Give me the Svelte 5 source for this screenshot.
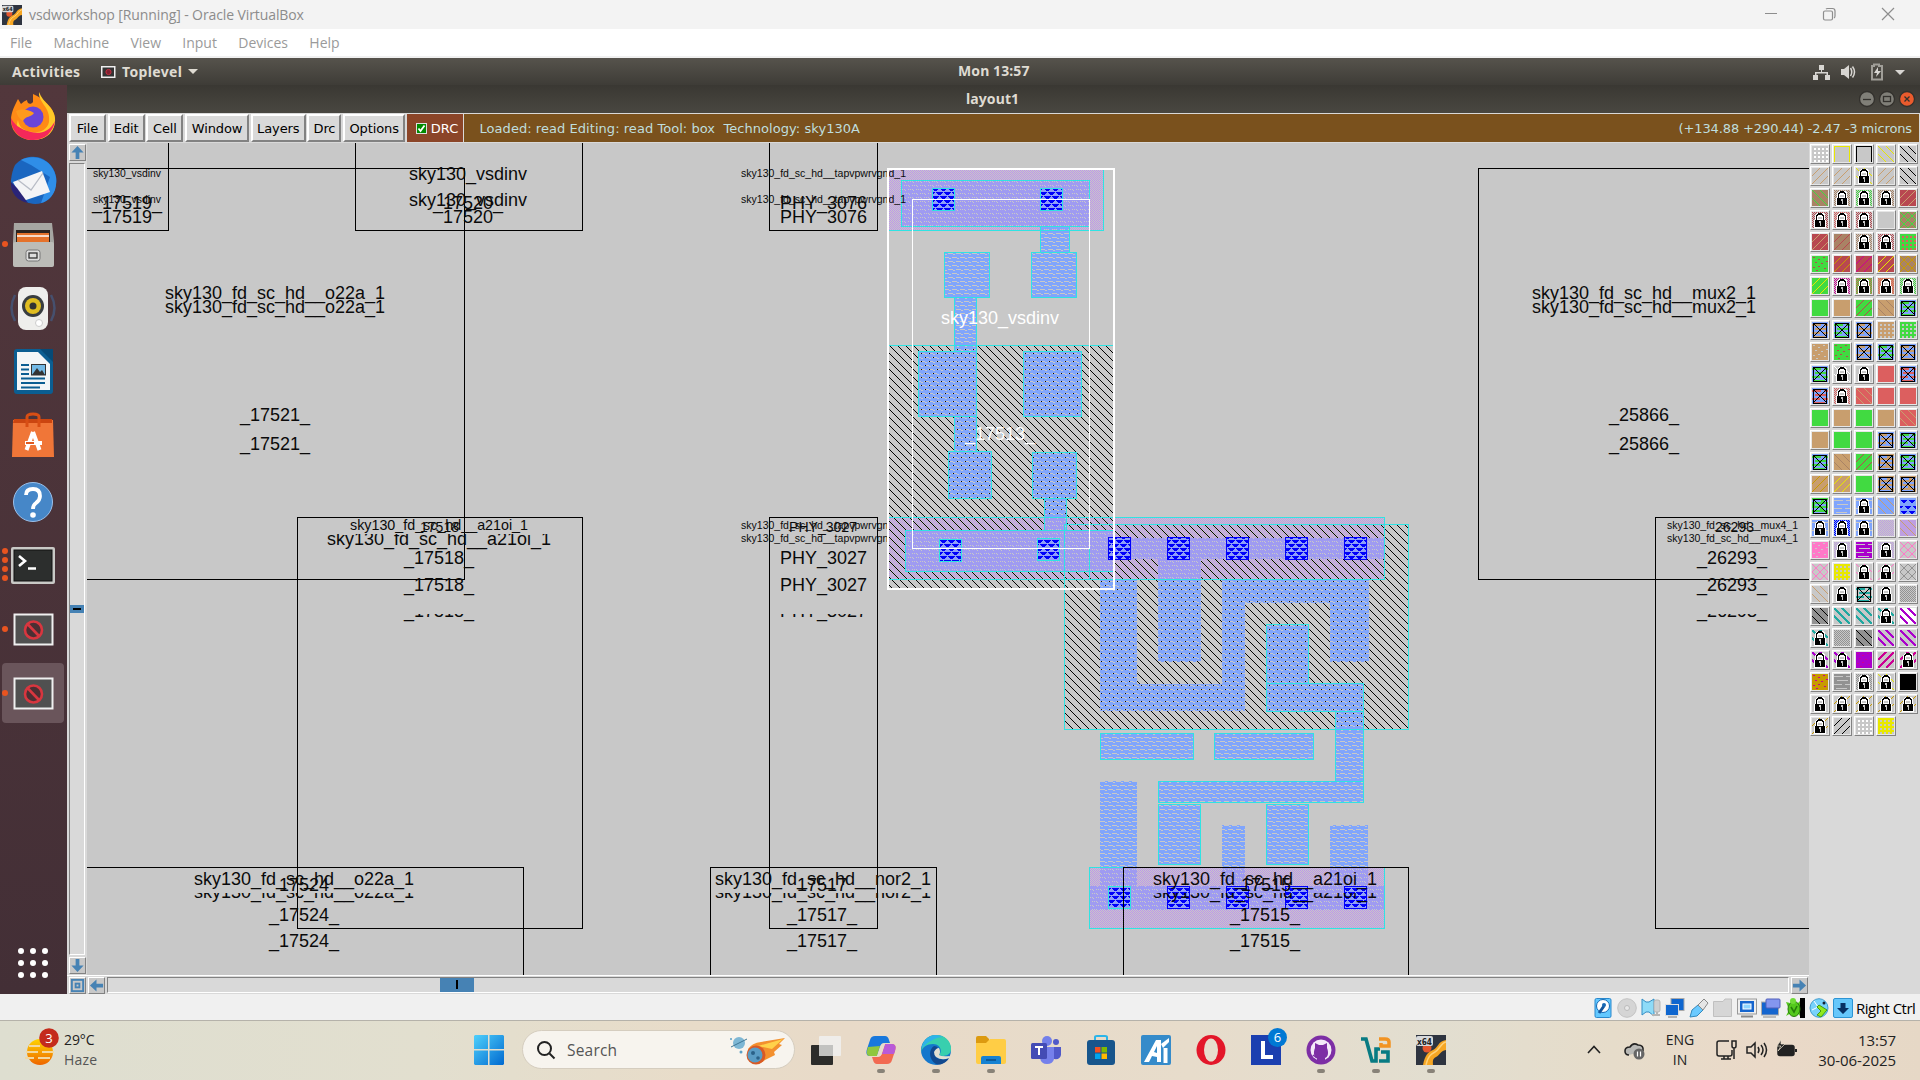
<script>
  const menus = ['File', 'Machine', 'View', 'Input', 'Devices', 'Help'];
  const buttons = [['File', 37], ['Edit', 37], ['Cell', 37], ['Window', 64], ['Layers', 55], ['Drc', 34], ['Options', 62]];
  const dock = ['firefox', 'mail', 'files', 'music', 'writer', 'store', 'help', 'term', 'x', 'x'];
  const dockDots = [0, 0, 1, 0, 0, 0, 0, 4, 1, 1];

  // Cell outlines: x1, y1, x2, y2
  const cells = [
    [60, 120, 168.5, 230.5], [355.5, 120, 582.5, 230.5], [60, 168.5, 464.5, 579.5],
    [297.5, 517.5, 582.5, 928.5], [60, 867.5, 523.5, 1000], [769.5, 120, 877.5, 230.5],
    [769.5, 517.5, 877.5, 928.5], [710.5, 867.5, 936.5, 1000],
    [1478.5, 168.5, 1840, 579.5], [1655.5, 517.5, 1840, 928.5]
  ];
  const wells = [[888.5, 345.5, 1113.5, 589.5], [1064.5, 524.5, 1408.5, 729.5]];
  const taps = [[888.5, 168.5, 1103.5, 230.5], [888.5, 517.5, 1384.5, 579.5], [1089.5, 867.5, 1384.5, 928.5]];
  const metal = [
    [1040.5, 226.5, 1069.5, 252.5], [1031.5, 252.5, 1076.5, 297.5], [944.5, 252.5, 989.5, 297.5],
    [954.5, 297.5, 976.5, 351.5], [918.5, 351.5, 976.5, 416.5], [1023.5, 351.5, 1081.5, 416.5],
    [954.5, 416.5, 976.5, 451.5], [948.5, 451.5, 991.5, 498.5], [1032.5, 452.5, 1076.5, 498.5],
    [1044.5, 498.5, 1066.5, 517.5],
    [1266.5, 624.5, 1308.5, 683.5], [1266.5, 683.5, 1363.5, 711.5], [1335.5, 711.5, 1363.5, 781.5],
    [1158.5, 781.5, 1363.5, 802.5], [1158.5, 804.5, 1200.5, 864.5], [1266.5, 804.5, 1308.5, 864.5],
    [1100.5, 733.5, 1193.5, 759.5], [1214.5, 733.5, 1313.5, 759.5]
  ];
  const bare = [
    [1100, 580, 1137, 684], [1158, 580, 1201, 662], [1222, 580, 1369, 603], [1222, 603, 1245, 684],
    [1330, 603, 1369, 662], [1100, 684, 1245, 711], [1100, 781, 1137, 867], [1222, 825, 1245, 867],
    [1330, 825, 1368, 867]
  ];
  const rails = [
    [901.5, 180.5, 1089.5, 226.5, 1], [905.5, 530.5, 1114.5, 571.5, 1], [1044.5, 517.5, 1066.5, 530.5, 1],
    [1115, 538, 1384, 559, 0], [1158, 559, 1201, 580, 0], [1090, 886, 1384, 910, 0],
    [1100, 868, 1137, 886, 0], [1222, 868, 1245, 886, 0], [1330, 868, 1368, 886, 0]
  ];
  const contacts = [
    [932.5, 188.5, 1], [1040.5, 188.5, 1], [939.5, 539.5, 1], [1037.5, 538.5, 1],
    [1108.5, 537.5, 0], [1167.5, 537.5, 0], [1226.5, 537.5, 0], [1285.5, 537.5, 0], [1344.5, 537.5, 0],
    [1108.5, 886.5, 1], [1167.5, 886.5, 0], [1226.5, 886.5, 0], [1285.5, 886.5, 0], [1344.5, 886.5, 0]
  ];

  // Labels: text, left x, baseline y, width, size, first visible row, last visible row
  const labels = [
    ['sky130_vsdinv', 93, 177, 68, 10.5], ['sky130_vsdinv', 93, 203, 68, 10.5],
    ['_17519_', 92, 209, 70, 18], ['_17519_', 92, 223, 70, 18, 209, 224],
    ['sky130_vsdinv', 409, 180, 118, 18], ['sky130_vsdinv', 409, 206, 118, 18],
    ['_17520_', 433, 209, 70, 18], ['_17520_', 433, 223, 70, 18, 209, 224],
    ['sky130_fd_sc_hd__o22a_1', 165, 299, 220, 18], ['sky130_fd_sc_hd__o22a_1', 165, 313, 220, 18],
    ['_17521_', 240, 421, 70, 18], ['_17521_', 240, 450, 70, 18],
    ['sky130_fd_sc_hd__a21oi_1', 350, 530, 178, 14.3], ['17518', 420, 532, 39, 14.3],
    ['sky130_fd_sc_hd__a21oi_1', 327, 545, 224, 18, 534, 555],
    ['_17518_', 404, 564, 70, 18], ['_17518_', 404, 591, 70, 18], ['_17518_', 404, 617, 70, 18, 614, 625],
    ['sky130_fd_sc_hd__o22a_1', 194, 885, 220, 18], ['17524', 279, 891, 50, 18],
    ['sky130_fd_sc_hd__o22a_1', 194, 898, 220, 18, 893, 910],
    ['_17524_', 269, 921, 70, 18], ['_17524_', 269, 947, 70, 18],
    ['PHY_3076', 780, 209, 87, 18], ['PHY_3076', 780, 223, 87, 18, 209, 224],
    ['sky130_fd_sc_hd__tapvpwrvgnd_1', 741, 529, 165, 10.5], ['sky130_fd_sc_hd__tapvpwrvgnd_1', 741, 542, 165, 10.5],
    ['PHY_3027', 789, 532, 68, 14.3],
    ['PHY_3027', 780, 564, 87, 18], ['PHY_3027', 780, 591, 87, 18], ['PHY_3027', 780, 617, 87, 18, 614, 625],
    ['sky130_fd_sc_hd__nor2_1', 715, 885, 216, 18], ['17517', 797, 891, 50, 18],
    ['sky130_fd_sc_hd__nor2_1', 715, 898, 216, 18, 893, 910],
    ['_17517_', 787, 921, 70, 18], ['_17517_', 787, 947, 70, 18],
    ['sky130_fd_sc_hd__mux2_1', 1532, 299, 224, 18], ['sky130_fd_sc_hd__mux2_1', 1532, 313, 224, 18],
    ['_25866_', 1609, 421, 70, 18], ['_25866_', 1609, 450, 70, 18],
    ['sky130_fd_sc_hd__mux4_1', 1667, 529, 131, 10.5], ['sky130_fd_sc_hd__mux4_1', 1667, 542, 131, 10.5],
    ['26293', 1715, 532, 39, 14.3],
    ['_26293_', 1697, 564, 70, 18], ['_26293_', 1697, 591, 70, 18], ['_26293_', 1697, 617, 70, 18, 614, 625]
  ];
  const topLabels = [
    ['sky130_fd_sc_hd__tapvpwrvgnd_1', 741, 177, 165, 10.5], ['sky130_fd_sc_hd__tapvpwrvgnd_1', 741, 203, 165, 10.5],
    ['sky130_fd_sc_hd__a21oi_1', 1153, 885, 224, 18], ['17515', 1241, 891, 50, 18],
    ['sky130_fd_sc_hd__a21oi_1', 1153, 898, 224, 18, 893, 910],
    ['_17515_', 1230, 921, 70, 18], ['_17515_', 1230, 947, 70, 18]
  ];

  const ink = {
    G: '#41da41', T: '#c89e6e', R: '#dc5f5f', M: '#b84850', B: '#a98365', C: '#c8c8c8', b: '#80a5fc', y: '#e8e800',
    p: '#aa00cc', k: '#000000', P: '#ff78c8', w: '#ffffff', t: '#20a8a0', o: '#c89a00', m: '#cc0094', l: '#be9fe2',
    g: '#929292', D: '#0000f5'
  };
  // Layer swatches: background, pattern, ink, optional lock
  const swatches = `Cgw Cby Cbk Cdy Cdk CuT CuT CdyL CuT Cdk
    BdG CcBL CcGL CcBL MuT CcML CcRL CcML CnC BxG
    MuT BuM CcBL CcML GgR GSM Muo Mum Muy Bxo
    Guy CcmL GcRL TcRL CcGL GnG TnT GuM TdB bXG
    bXT bXG bXT TgC GgC TSC GSM bXT bXG bXT
    bXG CdwL CnCL RnR bXR bXR CcRL RdT RnR RnR
    GnG TnT GnG TnT RdT TnT GnG GnG bXT bXG
    bXG TdB GuM TXb bXG Tuo Tuy GnG TXb TXb
    GXb bhC bhCL bdT btD bhCL bcDL bhCL Ccl ldT
    PSC CclL phC CclL CxP CxP ygC CdPL CuPL Cxg
    CdT CdCL CXt CdCL Ccg gdk Cdt Cdt CdtL wdp
    CdtL Ccg gdk Cdp Cdp CdpL CdpL pSm Cum CumL
    oSm ghC CcgL CdyL knk CnCL CuoL CuoL CuoL CuoL
    CuoL Cuk Cgw ygC`.trim().split(/\s+/);

  const hashPath = {
    d: 'M0 0L16 16M8 0L16 8M0 8L8 16',
    u: 'M0 8L8 0M0 16L16 0M8 16L16 8',
    x: 'M0 0L16 16M8 0L16 8M0 8L8 16M0 8L8 0M0 16L16 0M8 16L16 8',
    b: 'M.5 16V.5H15.5V16',
    h: 'M0 2.5H9M12 2.5H16M3 6.5H14M0 10.5H8M11 10.5H16M2 14.5H13',
    S: 'M1 1.5H3M6 3.5H8M11 1.5H13M3 6.5H5M9 7.5H11M14 5.5H16M1 11.5H3M6 10.5H8M12 12.5H14M4 14.5H6',
    g: 'M2 3H16M2 7H16M2 11H16M2 15H16',
    t: 'M1 2H7L4 5ZM9 2H15L12 5ZM0 8H3L0 10ZM5 8H11L8 11ZM13 8H16V11ZM1 13H7L4 16ZM9 13H15L12 16Z',
    n: ''
  };
  const tasks = ['view', 'copilot', 'edge', 'folder', 'teams', 'shop', 'ai', 'opera', 'l', 'git', 'vb', 'x64'];
  const running = ['copilot', 'edge', 'folder', 'git', 'vb', 'x64'];
  const status = ['disk', 'cd', 'audio', 'net', 'usb', 'share', 'screen', 'rec', 'turtle', 'mouse', 'key'];
</script>

{#snippet vbx64()}
  <rect width="30" height="30" fill="#2e3440" />
  <path d="M7 30C9 20 12 17 17 15S22 6 30 5V15C24 16 24 20 20 22S17 27 17 30Z" fill="#f6a623" />
  <path d="M10 30C12 21 15 19 19 17S25 8 30 7" fill="none" stroke="#ffd27a" stroke-width="1.5" />
  <circle cx="11" cy="13" r="4.5" fill="#e4572e" />
  <rect x="0" y="1" width="17" height="10" rx="2" fill="#d6d8da" />
  <text x="1" y="9.5" font-family="DejaVu Sans" font-weight="bold" font-size="8.5" textLength="15" lengthAdjust="spacingAndGlyphs" fill="#222">x64</text>
{/snippet}

{#snippet label(l, fill)}
  {#if l.length > 5}
    <svg x="87" y={l[5]} width="1722" height={l[6] - l[5]} viewBox="87 {l[5]} 1722 {l[6] - l[5]}">
      <text x={l[1]} y={l[2]} font-size={l[4]} textLength={l[3]} lengthAdjust="spacingAndGlyphs" {fill}>{l[0]}</text>
    </svg>
  {:else}
    <text x={l[1]} y={l[2]} font-size={l[4]} textLength={l[3]} lengthAdjust="spacingAndGlyphs" {fill}>{l[0]}</text>
  {/if}
{/snippet}

{#snippet box(r, fill, stroke)}
  <rect x={r[0]} y={r[1]} width={r[2] - r[0]} height={r[3] - r[1]} {fill} {stroke} />
{/snippet}

{#snippet arrow(turn)}
  <svg class="arrow" viewBox="0 0 16 16"><path d="M8 1L14.5 8H10V15H6V8H1.5Z" fill="#4682b4" transform="rotate({turn} 8 8)" /></svg>
{/snippet}

<div class="desktop">
  <header class="titlebar">
    <svg class="vbicon" viewBox="0 0 30 30">{@render vbx64()}</svg>
    <span class="wtitle">vsdworkshop [Running] - Oracle VirtualBox</span>
    <svg class="winctl" width="170" height="29" viewBox="0 0 170 29" fill="none" stroke="#8d8d8d" stroke-width="1.2">
      <path d="M15 13.5H27M132 8L144 20M144 8L132 20" /><rect x="73.500" y="11" width="9" height="9" rx="1.5" /><path d="M76 9Q76.500 8.500 77.500 8.500H82.500Q85 8.500 85 11V16Q85 17.500 84 18" />
    </svg>
  </header>
  <nav class="vmenu">{#each menus as m}<span>{m}</span>{/each}</nav>

  <div class="gnome">
    <span class="act">Activities</span>
    <svg width="15" height="12" viewBox="0 0 15 12"><rect x=".75" y=".75" width="13" height="10.500" fill="#333" stroke="#eee" stroke-width="1.500" /><circle cx="7.500" cy="6" r="2.600" fill="#802030" stroke="#c03040" /></svg>
    <span class="top">Toplevel</span>
    <i class="caret"></i>
    <span class="clock">Mon 13:57</span>
    <svg class="tray" width="100" height="26" viewBox="0 0 100 26" fill="#d8d6d2">
      <path d="M11 6H16V11H14V13H20V16H22V21H17V16H18.500V14.500H8.500V16H10V21H5V16H7V13H13V11H11Z" />
      <path d="M33 10H36L41 6V20L36 16H33Z" /><path d="M42.500 9Q45 13 42.500 17M44.500 7.500Q48.500 13 44.500 18.500" fill="none" stroke="#d8d6d2" stroke-width="1.500" />
      <path d="M64 7H66V5.500H71V7H74V20.500H64Z" fill="none" stroke="#a09e98" stroke-width="2" /><path d="M70 8L66 14H69L68 18L73 12H70Z" />
      <path d="M87 11H97L92 16Z" />
    </svg>
  </div>

  <div class="guest">
    <aside class="dock">
      {#each dock as d, i}
        <div class="item" class:on={i === 9}>
          <div class="dots">{#each Array(dockDots[i]) as _}<i></i>{/each}</div>
          <svg width="48" height="50" viewBox="0 0 48 50">
            {#if d === 'firefox'}
              <path d="M24 3C35 8 47 18 46 30C45 42 35 49 24 49C11 49 2 41 2 29C2 21 6 14 9 8L12 13Q15 10 18 9C18 13 22 14 24 11Z" fill="#ff8a16" />
              <path d="M30 1C29 12 42 16 40 31C38 40 29 42 24 41C13 40 10 35 9 29C5 40 13 49 24 49C38 49 47 40 46 27C45 16 34 12 30 1Z" fill="#ffc928" />
              <path d="M2 27C2 41 12 49 24 49C36 49 44 41 46 30C40 42 30 43 22 41C10 38 5 33 2 27Z" fill="#f5285a" />
              <circle cx="24" cy="26" r="10.500" fill="#6a45d8" /><path d="M7 20C14 17 20 19 25 22C23 26 16 25 14 30C10 28 8 24 7 20Z" fill="#ff9a1c" />
            {:else if d === 'mail'}
              <path d="M6 10C14 1 26 0 34 4C45 10 50 22 46 34C43 43 36 49 26 49C12 48 1 40 2 25Q3 16 6 10Z" fill="#1a66c0" /><path d="M12 5C22 -1 43 2 47 22C49 38 40 46 32 48L41 22L22 10Z" fill="#2f8ee8" />
              <path d="M4 27L33 16L41 37L14 46Z" fill="#f4f4f6" /><path d="M9 25L22 35L34 18" fill="none" stroke="#b8bcc6" stroke-width="1.300" /><path d="M2 27C1 38 9 46 19 48L8 33Z" fill="#2a2478" />
            {:else if d === 'files'}
              <path d="M5 4H43L45 22V44Q45 48 41 48H8Q4 48 4 44V22Z" fill="#a6a6a2" /><rect x="7" y="11" width="34" height="13" fill="#2d2420" /><rect x="8" y="14" width="32" height="9" fill="#e5722b" /><path d="M8 17H40" stroke="#fff" stroke-width="1.500" />
              <rect x="4" y="23" width="41" height="25" rx="2" fill="#bcbcb8" /><rect x="17" y="31" width="14" height="11" rx="2.500" fill="#ddd" stroke="#777" /><rect x="20" y="34" width="8" height="5" fill="none" stroke="#333" stroke-width="1.300" />
            {:else if d === 'music'}
              <path d="M6 12Q-1 25 6 38M42 12Q49 25 42 38" fill="none" stroke="#46506e" stroke-width="2.500" /><rect x="9" y="4" width="30" height="43" rx="8" fill="#eeeeec" /><circle cx="24" cy="23" r="11" fill="#383d40" /><circle cx="24" cy="23" r="8" fill="#e0bd20" /><circle cx="24" cy="23" r="3.500" fill="#333" /><circle cx="30" cy="40" r="3.500" fill="#fff" stroke="#ccc" />
            {:else if d === 'writer'}
              <path d="M8 2H34L44 13V44Q44 47 41 47H8Q5 47 5 44V5Q5 2 8 2Z" fill="#0b5e92" /><path d="M8 5H29L41 17V43H8Z" fill="#f3f6f7" /><path d="M31 2H44V15Z" fill="#064a77" /><path d="M12 18H20M12 22.500H20M12 27H20M12 31.500H36M12 36H36M12 40.500H31" stroke="#0b5e92" stroke-width="2.200" /><rect x="22.500" y="17.500" width="14" height="10.500" fill="#72b9e5" stroke="#333" /><path d="M23 28L28 21L31 25L33 23L36 28Z" fill="#333" />
            {:else if d === 'store'}
              <path d="M4 9H44L45 46H3Z" fill="#f07638" /><path d="M5 8H43V12H4Z" fill="#cb4510" /><path d="M18 16V6Q18 3 24 3T30 6V16" fill="none" stroke="#d84e14" stroke-width="3" /><path d="M24 21L17.500 39M24 21L30.500 39M16 32H33" fill="none" stroke="#fff" stroke-width="4" /><path d="M17 32H25" stroke="#e05a20" stroke-width="2" />
            {:else if d === 'help'}
              <circle cx="24" cy="26" r="19.500" fill="#4687c8" stroke="#9bc0ea" /><path d="M17 19Q17 13 24 13T31 20Q31 24 27 27Q24 29 24 33" fill="none" stroke="#fff" stroke-width="3.800" /><circle cx="24" cy="39" r="2.800" fill="#fff" />
            {:else if d === 'term'}
              <rect x="2" y="7" width="44" height="37" rx="2" fill="#c9c9c6" /><rect x="5" y="10" width="38" height="31" fill="#2c2e2d" stroke="#111" /><path d="M10 16L16 21L10 26M19 28.500H27" fill="none" stroke="#fff" stroke-width="2.600" />
            {:else}
              <rect x="5.500" y="10.500" width="38" height="30" fill="#505050" stroke="#f0f0f0" stroke-width="2" /><circle cx="24.500" cy="26" r="8.500" fill="#4b2f33" stroke="#d8363f" stroke-width="2.600" /><path d="M18.500 20L30 32" stroke="#d8363f" stroke-width="2.600" />
            {/if}
          </svg>
        </div>
      {/each}
      <div class="apps">{#each Array(9) as _}<i></i>{/each}</div>
    </aside>

    <section class="magic">
      <div class="wintitle"><span>layout1</span>
        <svg width="60" height="28" viewBox="0 0 60 28" fill="none" stroke="#33312d" stroke-width="1.300">
          <circle cx="8" cy="14" r="7.500" fill="#807f78" /><path d="M4 14.500H12" /><circle cx="28" cy="14" r="7.500" fill="#807f78" /><rect x="24.500" y="11.500" width="7" height="5" /><circle cx="48" cy="14" r="7.500" fill="#ea5b2d" /><path d="M45.500 11.500L50.500 16.500M50.500 11.500L45.500 16.500" />
        </svg>
      </div>
      <div class="menubar">
        {#each buttons as b}<button style:width="{b[1]}px">{b[0]}</button>{/each}
        <div class="drc"><svg width="11" height="11" viewBox="0 0 11 11"><rect x=".5" y=".5" width="10" height="10" fill="#008a00" stroke="#ddd" /><path d="M2.500 5.500L4.500 8L8.500 2.500" fill="none" stroke="#fff" stroke-width="1.800" /></svg>DRC</div>
        <div class="info"><pre>Loaded: read Editing: read Tool: box  Technology: sky130A</pre><span>(+134.88 +290.44) -2.47 -3 microns</span></div>
      </div>
      <div class="body">
        <div class="left">
          <div class="work">
            <div class="vscroll"><div class="sb">{@render arrow(0)}</div><div class="track"><i></i></div><div class="sb">{@render arrow(180)}</div></div>
            <svg class="canvas" width="1722" height="832" viewBox="87 143 1722 832" shape-rendering="crispEdges" font-family="Liberation Sans, sans-serif">
              <defs>
                <pattern id="hatch" width="8" height="8" patternUnits="userSpaceOnUse"><path d="M0 0h1v1H0zM1 1h1v1H1zM2 2h1v1H2zM3 3h1v1H3zM4 4h1v1H4zM5 5h1v1H5zM6 6h1v1H6zM7 7h1v1H7z" /></pattern>
                <pattern id="tap" width="2" height="2" patternUnits="userSpaceOnUse"><path d="M0 0h1v1H0zM1 1h1v1H1z" fill="#be96ea" /></pattern>
                <pattern id="metal" width="8" height="8" patternUnits="userSpaceOnUse"><path d="M0 0h8v1H0zM5 1h3v1H5zM0 2h5v1H0zM7 2h1v1H7zM0 3h8v2H0zM1 5h3v1H1zM0 6h1v1H0zM3 6h5v1H3zM0 7h8v1H0z" fill="#80a5fc" /></pattern>
                <pattern id="rail" width="8" height="8" patternUnits="userSpaceOnUse"><path d="M0 0h8v1H0zM1 1h1v1H1zM3 1h1v1H3zM5 1h3v1H5zM0 2h5v1H0zM6 2h2v1H6zM0 3h8v2H0zM1 5h3v1H1zM5 5h1v1H5zM7 5h1v1H7zM0 6h1v1H0zM2 6h6v1H2zM0 7h8v1H0z" fill="#9f9bf1" /></pattern>
                <pattern id="via" width="8" height="8" patternUnits="userSpaceOnUse"><rect width="8" height="8" fill="#8f9ff8" /><path d="M0 0h7v1H0zM1 1h5v1H1zM2 2h3v1H2zM0 4h3v1H0zM4 4h4v1H4zM0 5h2v1H0zM5 5h3v1H5zM0 6h1v1H0zM6 6h2v1H6z" fill="#0000fa" /></pattern>
              </defs>
              {#each cells as c}{@render box(c, 'none', '#000')}{/each}
              {#each labels as l}{@render label(l, '#0a0a0a')}{/each}
              <rect x="888" y="517" width="225" height="72" fill="#c8c8c8" />
              {#each taps as r}{@render box(r, 'url(#tap)', 'none')}{/each}
              {#each wells as r}{@render box(r, 'url(#hatch)', 'none')}{/each}
              {#each bare as r}{@render box(r, 'url(#metal)', 'none')}{/each}
              {#each metal as r}{@render box(r, 'url(#metal)', '#2fe3e3')}{/each}
              {#each rails as r}{@render box(r, 'url(#rail)', r[4] ? '#2fe3e3' : 'none')}{/each}
              {#each taps as r}{@render box(r, 'none', '#2fe3e3')}{/each}
              {#each wells as r}{@render box(r, 'none', '#2fe3e3')}{/each}
              <path d="M1089.500 517.500V579.500" stroke="#2fe3e3" />
              {#each contacts as c}<rect x={c[0]} y={c[1]} width="22" height="22" fill="url(#via)" stroke={c[2] ? '#2fe3e3' : '#0000fa'} />{/each}
              <rect x="1123.500" y="867.500" width="285" height="140" fill="none" stroke="#000" />
              {#each topLabels as l}{@render label(l, '#0a0a0a')}{/each}
              <rect x="888" y="169" width="226" height="420" fill="none" stroke="#fff" stroke-width="2" />
              <rect x="912.500" y="199.500" width="177" height="349" fill="none" stroke="#fff" />
              {@render label(['sky130_vsdinv', 941, 324, 118, 18], '#fff')}
              {@render label(['_17513_', 965, 440, 70, 18], '#fff')}
            </svg>
          </div>
          <div class="hscroll"><div class="sb"><svg class="arrow" viewBox="0 0 16 16" fill="none" stroke="#4682b4" stroke-width="2"><rect x="2" y="2" width="12" height="12" /><rect x="6" y="6" width="4" height="4" /></svg></div><div class="sb">{@render arrow(270)}</div><div class="track"><i></i></div><div class="sb">{@render arrow(90)}</div></div>
        </div>
        <div class="palette">
          {#each swatches as s}
            <div class="sw">
              <svg width="16" height="16" viewBox="0 0 16 16" shape-rendering="crispEdges">
                <rect width="16" height="16" fill={ink[s[0]]} />
                {#if s[1] === 'X'}
                  <path d={hashPath.h} stroke={ink[s[2]]} stroke-width="2" />
                  <path d="M1.500 1.500H14.500V15H1.500Z" stroke="#000" fill="none" />
                  <path d="M2 2L14 14M14 2L2 14" stroke="#000" />
                {:else if s[1] === 'c'}
                  {#each Array(8) as _, r}<path d="M0 {r * 2 + .5}H16" stroke={ink[s[2]]} stroke-dasharray="1 1" /><path d="M1 {r * 2 + 1.5}H16" stroke={ink[s[2]]} stroke-dasharray="1 1" />{/each}
                {:else if s[1] === 'g'}
                  <path d={hashPath.g} stroke={ink[s[2]]} stroke-width="2" stroke-dasharray="2 2" />
                {:else}
                  <path d={hashPath[s[1]]} stroke={ink[s[2]]} stroke-width={'ptm'.includes(s[2]) && s[0] !== 'M' ? 1.8 : 1} fill={s[1] === 't' ? ink[s[2]] : 'none'} />
                {/if}
                {#if s[3]}
                  <path d="M2 16V8H3V3L5 1H11L13 3V8H14V16Z" fill="#fff" />
                  <path d="M3 8H13V15H3Z" fill="#000" /><path d="M4.500 8V4.500L6.500 2H9.500L11.500 4.500V8" fill="none" stroke="#000" stroke-width="1.300" />
                  <path d="M6 5H10V7H6ZM7 9H9V11H8.500V14H7.500V11H7Z" fill="#c8c8c8" />
                {/if}
              </svg>
            </div>
          {/each}
        </div>
      </div>
    </section>
  </div>

  <footer class="status">
    {#each status as s}
      <svg width="20" height="20" viewBox="0 0 20 20">
        {#if s === 'disk'}
          <rect x="2" y=".5" width="16" height="19" rx="1.500" fill="#62c8ff" stroke="#2a88cc" /><circle cx="10" cy="8" r="6.500" fill="#fff" stroke="#1768b4" /><path d="M11 8L6 15" stroke="#14559c" stroke-width="3" /><circle cx="11" cy="7" r="2" fill="#1768b4" />
        {:else if s === 'cd'}
          <circle cx="10" cy="10" r="9.300" fill="#d5d5d5" stroke="#c2c2c2" /><circle cx="10" cy="10" r="2.500" fill="#e8e8e8" stroke="#bbb" />
        {:else if s === 'audio'}
          <path d="M1 1L5 4H8L13 1V18L8 14H5L1 17Z" fill="#8edbf8" stroke="#358dc4" /><rect x="13" y="2" width="6" height="12" rx="2" fill="#d0d0d0" stroke="#b5b5b5" /><path d="M11 17H19M16 14V17" fill="none" stroke="#b5b5b5" stroke-width="2" />
        {:else if s === 'net'}
          <rect x="6" y=".5" width="13" height="12" fill="#0f66cf" stroke="#aaa" /><rect x=".5" y="6.500" width="13" height="11" fill="#0f66cf" stroke="#ddd" /><path d="M3 19H12" stroke="#777" />
        {:else if s === 'usb'}
          <path d="M1 19L3 12L9 7L14 12L8 18Z" fill="#6bcaff" stroke="#3389bd" /><path d="M9 7L15 1L19 5L14 12Z" fill="#e5e5e5" stroke="#888" />
        {:else if s === 'share'}
          <path d="M.5 18.500V3.500H10L12 1H18.500V18.500Z" fill="#d6d6d6" stroke="#c0c0c0" />
        {:else if s === 'screen'}
          <rect x=".5" y="1" width="19" height="15" fill="#eee" stroke="#999" /><rect x="3" y="3" width="14" height="11" fill="#1565ce" /><rect x="6" y="6" width="8" height="5" fill="#8fd5ff" stroke="#fff" /><path d="M4 18.500H16" stroke="#888" stroke-width="2" />
        {:else if s === 'rec'}
          <rect x=".5" y="4" width="17" height="13" fill="#1465cf" stroke="#aaa" /><rect x="5" y="1" width="14" height="9" rx="1" fill="#8596ef" stroke="#5260ba" /><path d="M2 19H15" stroke="#888" />
        {:else if s === 'turtle'}
          <rect x="15" y="0" width="5" height="20" fill="#000" /><path d="M1 4L5 5L3 9ZM1 18L6 15L4 12ZM15 3L12 6V14L15 18Z" fill="#54c91d" /><ellipse cx="9" cy="11" rx="6" ry="7.500" fill="#54c91d" stroke="#28780c" /><circle cx="8" cy="3" r="3" fill="#70dc37" /><path d="M6 9L9 14L12 8" stroke="#267d0b" stroke-width="1.600" fill="none" />
        {:else if s === 'mouse'}
          <ellipse cx="10" cy="10" rx="9" ry="9.300" fill="#77d2fb" stroke="#3f9bce" /><path d="M5 3L9 9L3 12" stroke="#fff" fill="none" /><path d="M10 7L18 12L12 19L8 17L12 13L8 9Z" fill="#8fea20" stroke="#429b10" /><circle cx="15" cy="5" r="1.500" fill="#123" />
        {:else}
          <rect x=".5" y=".5" width="19" height="19" rx="1.500" fill="#66c7fb" stroke="#2d94d3" /><path d="M7.500 5H12.500V10H16L10 16L4 10H7.500Z" fill="#073064" />
        {/if}
      </svg>
    {/each}
    <span>Right Ctrl</span>
  </footer>

  <footer class="taskbar">
    <div class="weather">
      <svg width="38" height="44" viewBox="0 0 38 44"><defs><linearGradient id="sun" x2="0" y2="1"><stop stop-color="#ffd400" /><stop offset="1" stop-color="#ee6500" /></linearGradient></defs>
        <circle cx="16" cy="24" r="13" fill="url(#sun)" /><path d="M5 18H16M2 24H14M18 24H30M1 30H10M14 30H26" stroke="#f2d8a0" stroke-width="2" /><circle cx="25" cy="10" r="9.800" fill="#c42b1c" /><text x="25" y="14.500" font-size="13" fill="#fff" text-anchor="middle">3</text></svg>
      <div><b>29°C</b><span>Haze</span></div>
    </div>
    <svg class="start" width="30" height="30" viewBox="0 0 30 30"><defs><linearGradient id="win" x2="1" y2="1"><stop stop-color="#4fd0fb" /><stop offset="1" stop-color="#0069d0" /></linearGradient></defs><path d="M1 0H14V14H0V1ZM15.500 0H29L30 1V14H15.500ZM0 15.500H14V30H1L0 29ZM15.500 15.500H30V29L29 30H15.500Z" fill="url(#win)" /></svg>
    <div class="search">
      <svg width="20" height="20" viewBox="0 0 20 20" fill="none" stroke="#222" stroke-width="2"><circle cx="8.500" cy="8.500" r="6.500" /><path d="M13.500 13.500L18.500 18.500" /></svg>
      <span>Search</span>
      <svg width="58" height="30" viewBox="0 0 58 30"><circle cx="11" cy="8" r="6" fill="#7eb7d4" /><path d="M3 12L19 4" stroke="#3e7694" /><circle cx="3" cy="4" r="1" fill="#5ba0c6" /><circle cx="13" cy="17" r="1.500" fill="#5ba0c6" /><path d="M20 14Q24 8 33 7L57 3L51 9L54 10L46 17L47 20L37 25Q31 31 22 26Z" fill="#f3902e" /><path d="M30 11L55 4L44 14Z" fill="#ffd24a" /><circle cx="28" cy="20" r="9.500" fill="#d85a26" /><circle cx="27" cy="20" r="7.500" fill="#5a9cc4" /><circle cx="25" cy="18" r="2" fill="#2a6188" /><circle cx="30" cy="23" r="1.800" fill="#2a6188" /></svg>
    </div>
    <div class="tasks">
      {#each tasks as t}
        <div class="task" class:run={running.includes(t)}>
          <svg width="30" height="30" viewBox="0 0 30 30">
            {#if t === 'view'}
              <rect x="0" y="10" width="22" height="20" rx="1" fill="#2c2c2a" /><rect x="8" y="1" width="22" height="20" rx="1" fill="#efefed" fill-opacity=".92" /><rect x="8" y="10" width="14" height="11" fill="#c2c2c0" />
            {:else if t === 'copilot'}
              <path d="M9 1H19Q22 1 23 5L24 8H18Q15 8 14 12L11 21H4Q-1 21 1 14L4 5Q5 1 9 1Z" fill="#1878dc" /><path d="M2 12L14 11L11 21H4Q-1 21 2 12Z" fill="#8fc73e" /><path d="M21 29H11Q8 29 7 25L6 22H12Q15 22 16 18L19 9H26Q31 9 29 16L26 25Q25 29 21 29Z" fill="#f26a52" /><path d="M19 9H26Q31 9 29 16L28 19H16Z" fill="#b95ad8" /><path d="M18 9Q15 9 14 12L11 21Q15 22 16 18L19 9Z" fill="#e7dccb" />
            {:else if t === 'edge'}
              <circle cx="15" cy="15" r="15" fill="#1577cc" /><path d="M1 11C4 2 11 0 16 0C25 0 31 8 30 15C29 21 22 22 18 20C22 16 19 9 12 9C6 9 1 12 0 18Z" fill="#38cfae" /><path d="M1 11C4 2 11 0 16 0L22 2C15 2 8 6 1 13Z" fill="#2eb3e8" /><path d="M13 11C7 15 8 25 15 29C20 31 26 27 28 23C22 26 15 24 14 20C13 17 16 15 17 13Q16 11 13 11Z" fill="#12498f" /><path d="M13 17Q15 13 18 13Q20 17 18 20Q21 22 29 21L28 23Q21 26 15 22Q13 20 13 17Z" fill="#e4dfd1" />
            {:else if t === 'folder'}
              <path d="M0 3Q0 1 2 1H10L13 4V10H0Z" fill="#dc9a10" /><path d="M0 8H10L14 4H28Q30 4 30 6V27Q30 29 28 29H2Q0 29 0 27Z" fill="#ffcd45" /><path d="M5 29V23Q5 21 7 21H23Q25 21 25 23V29Z" fill="#1782d2" /><path d="M10 25H20" stroke="#0b4c86" stroke-width="1.500" />
            {:else if t === 'teams'}
              <circle cx="16" cy="6" r="5" fill="#7380ea" /><circle cx="25" cy="7" r="3" fill="#5059c9" /><path d="M9 12H23V24Q22 29 16 29T9 23Z" fill="#7580eb" /><path d="M23 12H30V20Q29 25 23 24Z" fill="#5059c9" /><rect x="0" y="8" width="16" height="16" rx="1.500" fill="#444cb5" /><path d="M4 12H12M8 12V20" stroke="#fff" stroke-width="2" />
            {:else if t === 'shop'}
              <path d="M9 6V2Q9 1 11 1H19Q21 1 21 2V6" fill="none" stroke="#2bb5e9" stroke-width="2" /><rect x="1" y="5" width="28" height="25" rx="3" fill="#17558c" /><rect x="9" y="12" width="5.500" height="5.500" fill="#f25022" /><rect x="15.500" y="12" width="5.500" height="5.500" fill="#7fba00" /><rect x="9" y="18.500" width="5.500" height="5.500" fill="#00a4ef" /><rect x="15.500" y="18.500" width="5.500" height="5.500" fill="#ffb900" />
            {:else if t === 'ai'}
              <rect width="30" height="30" rx="2" fill="#358bca" /><path d="M3 27L15 5H20V27H16V22L11 21L8 27ZM16 11L13 17L16 18Z" fill="#fff" fill-rule="evenodd" /><path d="M24.500 13V28" fill="none" stroke="#fff" stroke-width="4" /><path d="M20 9L28 3V7L22 13Z" fill="#fff" />
            {:else if t === 'opera'}
              <ellipse cx="15" cy="15" rx="14.500" ry="15" fill="#e31629" /><ellipse cx="15" cy="15" rx="7" ry="11.500" fill="#e7ddcd" />
            {:else if t === 'l'}
              <rect width="30" height="30" fill="#1b3fb0" /><path d="M12 6V22H22" fill="none" stroke="#fff" stroke-width="4" />
            {:else if t === 'git'}
              <circle cx="15" cy="15" r="14.500" fill="#7d2ea5" /><circle cx="15" cy="15" r="10.500" fill="#f4eaf8" /><path d="M11 27V23C8 22 7 18 9 13V8L13 10H17L21 8V13C23 18 22 22 19 23V27Z" fill="#7d2ea5" /><path d="M7 20L11 23" stroke="#7d2ea5" stroke-width="1.500" />
            {:else if t === 'vb'}
              <path d="M0 4H5L11 26H15V14H19M20 17H27V26H18" fill="none" stroke="#087b83" stroke-width="3.600" /><path d="M18 4H24Q28 4 28 7V11H20V8" fill="none" stroke="#f29322" stroke-width="3.500" />
            {:else}{@render vbx64()}{/if}
          </svg>
          {#if t === 'l'}<em>6</em>{/if}
        </div>
      {/each}
    </div>
    <div class="systray">
      <svg width="62" height="30" viewBox="0 0 62 30" fill="none" stroke="#222" stroke-width="1.600"><path d="M1 18L7 11.500L13 18" /><path d="M42 20Q38 20 38 16T43 12Q46 7 51 10Q57 10 56 16" fill="#b9b9b6" /><circle cx="52" cy="19" r="5.500" fill="#666" stroke="none" /><path d="M50.500 16.500V21.500M53.500 16.500V21.500" stroke="#fff" stroke-width="1.200" /></svg>
      <div class="lang">ENG<br />IN</div>
      <svg width="82" height="30" viewBox="0 0 82 30" fill="none" stroke="#222" stroke-width="1.500"><path d="M13 6H3Q1 6 1 8V19Q1 21 3 21H14Q16 21 16 19V15M5 24H15M8 21V24M12 21V24M16 6H20V11Q20 13 18 13T16 11ZM18 13V24" /><path d="M31 12H35L39 8V22L35 18H31ZM42 12Q44 15 42 18M45 10Q49 15 45 20M48 8Q53 15 48 22" /><rect x="62" y="10.500" width="16" height="10" rx="2" fill="#222" /><path d="M80 14V17" stroke-width="2" /><path d="M65 5L61 11H65L62 16L69 9H65Z" fill="#222" stroke="#e8dfcd" stroke-width=".7" /></svg>
      <div class="time">13:57<br />30-06-2025</div>
    </div>
  </footer>
</div>

<style>
  :global(body) { margin: 0; overflow: hidden; }
  .desktop { width: 1920px; height: 1080px; display: flex; flex-direction: column; background: #f0f0f0; font-family: 'Open Sans', 'Noto Sans', sans-serif; box-sizing: border-box; }
  svg { display: block; flex: none; }
  .titlebar { height: 29px; background: #f3f3f3; display: flex; align-items: center; padding-left: 2px; color: #8c8c8c; font-size: 14px; }
  .vbicon { width: 20px; height: 20px; }
  .wtitle { margin-left: 7px; letter-spacing: -0.1px; }
  .winctl { margin-left: auto; margin-right: 0; }
  .vmenu { height: 27px; border-bottom: 2px solid #f0f0f0; background: #fff; display: flex; align-items: center; gap: 21.3px; padding-left: 10px; color: #9a9a9a; font-size: 14px; }
  .gnome { height: 27px; background: linear-gradient(#56534c, #3e3c37); color: #dfdbd2; font: bold 14px/25px 'Noto Sans', sans-serif; letter-spacing: .35px; display: flex; align-items: center; padding-left: 12px; position: relative; }
  .gnome .act { width: 89px; padding-bottom: 1px; }
  .gnome .top { margin-left: 6px; padding-bottom: 1px; }
  .caret { margin-left: 6px; border: 5px solid transparent; border-top-color: #dfdbd2; border-bottom: 0; }
  .clock { position: absolute; left: 958px; top: 0; letter-spacing: .1px; }
  .tray { margin-left: auto; margin-right: 12px; }
  .guest { height: 909px; display: flex; }
  .dock { width: 67px; background: linear-gradient(#52373c, #432f36); display: flex; flex-direction: column; }
  .item { height: 60.2px; margin: 1.900px 3px 2px 2px; border-radius: 4px; display: flex; align-items: center; }
  .item:first-child { margin-top: 1px; }
  .item.on { background: #6a555b; }
  .dots { width: 7px; display: flex; flex-direction: column; gap: 3px; }
  .dots i { width: 6px; height: 6px; border-radius: 50%; background: #e95420; }
  .apps { margin: auto 0 16px 18px; display: grid; grid-template-columns: repeat(3, 6px); gap: 6px; }
  .apps i { width: 6px; height: 6px; border-radius: 50%; background: #fff; }
  .magic { width: 1853px; background: #d9d9d9; display: flex; flex-direction: column; }
  .wintitle { height: 28px; background: linear-gradient(#3a3833, #494741); color: #dfdbd2; font: bold 14px/27px 'Noto Sans', sans-serif; letter-spacing: .1px; display: flex; align-items: center; justify-content: flex-end; position: relative; }
  .wintitle span { position: absolute; left: 899px; top: 0; }
  .wintitle svg { margin-right: 1px; }
  .menubar { height: 28px; padding: 1px 1px 1px 2px; display: flex; gap: 1.7px; font: 13px 'DejaVu Sans', sans-serif; }
  button { flex: none; padding: 0; background: #d9d9d9; color: #000; border: 2px solid; border-color: #fff #828282 #828282 #fff; font: 13px 'DejaVu Sans', sans-serif; white-space: nowrap; letter-spacing: -.1px; }
  .drc { width: 56px; box-sizing: border-box; background: #8b4528; color: #fff; display: flex; align-items: center; gap: 4px; padding-left: 9px; }
  .info { flex: 1; margin-left: -1px; background: #7a511d; color: #bfdede; display: flex; align-items: center; justify-content: space-between; padding: 0 7px 0 16px; }
  .info span { letter-spacing: -.12px; }
  pre { margin: 0; font: inherit; letter-spacing: .05px; }
  .body { height: 851px; display: flex; }
  .left { width: 1742px; display: flex; flex-direction: column; }
  .work { display: flex; height: 832px; }
  .vscroll { width: 20px; display: flex; flex-direction: column; align-items: center; padding: 1px 0; box-sizing: border-box; gap: 2px; }
  .canvas { background: #c8c8c8; }
  .sb { width: 17px; height: 17px; flex: none; box-sizing: border-box; border: 1px solid; border-color: #fff #828282 #828282 #fff; background: #c8c8c8; }
  .arrow { width: 15px; height: 15px; }
  .track { border: 1px solid; border-color: #828282 #fff #fff #828282; flex: 1; box-sizing: border-box; }
  .vscroll .track { width: 16px; padding-top: 441px; }
  .vscroll .track i { display: flex; height: 8px; background: #4682b4; }
  .vscroll .track i::after { content: ''; width: 9px; height: 2px; margin: 3px; background: #000; }
  .hscroll { height: 19px; display: flex; align-items: center; padding: 0 1px 0 2px; gap: 2px; border-top: 1px solid #fff; box-sizing: border-box; }
  .hscroll .track { height: 16px; padding-left: 332px; }
  .hscroll .track i { display: flex; width: 34px; height: 14px; background: #4682b4; }
  .hscroll .track i::after { content: ''; width: 2px; height: 9px; margin: 2px 16px; background: #000; }
  .palette { display: grid; grid-template-columns: repeat(5, 20px); grid-auto-rows: 20px; gap: 2px; padding: 1px 0 0 1px; align-content: start; }
  .sw { box-sizing: border-box; width: 20px; height: 20px; border: 1px solid; border-color: #fff #828282 #828282 #fff; padding: 1px; background: #e6e6e6; }
  .status { height: 27px; display: flex; align-items: center; justify-content: flex-end; gap: 4px; padding: 1px 2px 0 0; box-sizing: border-box; background: #f0f0f0; border-bottom: 1px solid #b5b2aa; font-size: 14px; color: #000; }
  .status span { width: 62px; font-size: 15px; letter-spacing: -.5px; white-space: nowrap; margin-left: -1px; }
  .taskbar { height: 59px; padding-bottom: 2px; box-sizing: border-box; display: flex; align-items: center; background: linear-gradient(90deg, #deded0, #e2dfcf 22%, #e8dcc9 36%, #e8dac8 44%, #e7dccb 62%, #e2ded0 75%, #e6dcca 84%, #ead9c8 92%, #e6d8c6); color: #222; font-size: 14px; }
  .weather { width: 474px; display: flex; align-items: center; padding-left: 24px; box-sizing: border-box; gap: 2px; }
  .weather b { display: block; font-weight: 400; line-height: 20px; letter-spacing: -.1px; }
  .weather span { display: block; color: #555; line-height: 20px; letter-spacing: .2px; }
  .start { margin-right: 18px; }
  .search { width: 273px; height: 39px; box-sizing: border-box; border-radius: 20px; background: #f7f4ee; border: 1px solid #d5cdbf; display: flex; align-items: center; padding: 0 8px 0 13px; }
  .search span { margin: 0 auto 0 11px; font-size: 15.500px; color: #555; letter-spacing: .2px; }
  .tasks { display: flex; margin-left: 3px; }
  .task { width: 55px; height: 59px; display: flex; align-items: center; justify-content: center; position: relative; }
  .run::after { content: ''; position: absolute; bottom: 6px; left: 24px; width: 8px; height: 4px; border-radius: 2px; background: #888278; }
  em { position: absolute; left: 30px; top: 8px; width: 19px; height: 19px; border-radius: 50%; background: #0078d4; color: #fff; font: 13px/19px 'Open Sans', sans-serif; text-align: center; }
  .systray { margin-left: auto; display: flex; align-items: center; padding-right: 24px; line-height: 20px; }
  .systray svg:first-child { margin: 0 0 0 -3px; }
  .lang { width: 64px; text-align: center; margin: 0 4px 0 -1px; }
  .time { text-align: right; width: 98px; white-space: nowrap; font-size: 15px; letter-spacing: -.05px; }
</style>
